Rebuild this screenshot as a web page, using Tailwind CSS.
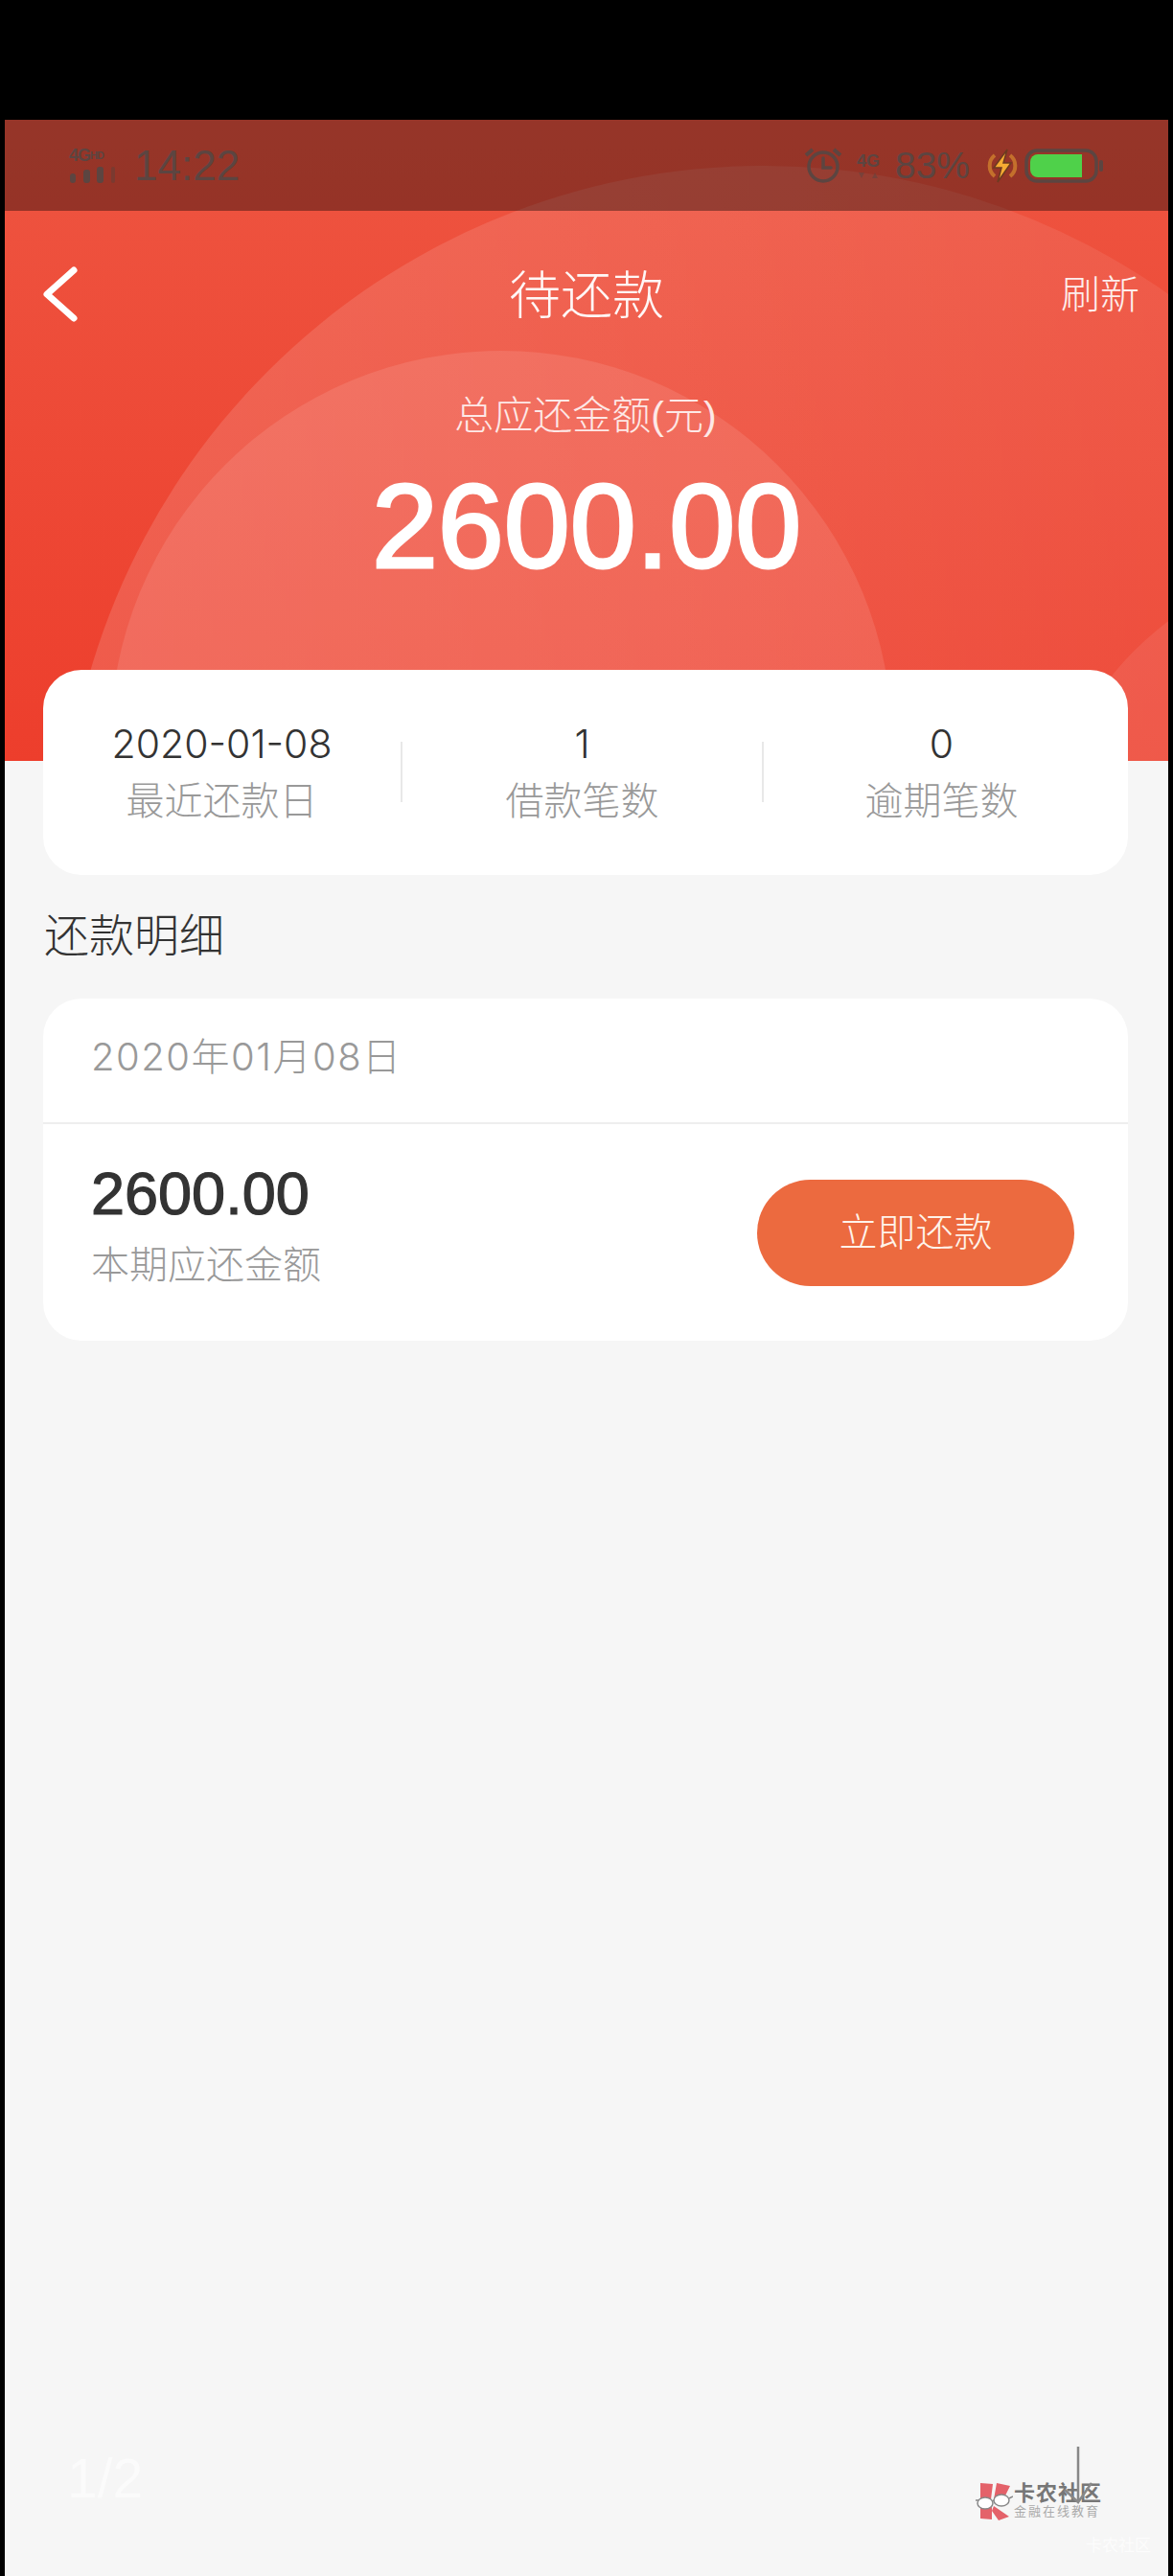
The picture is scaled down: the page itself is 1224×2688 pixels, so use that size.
<!DOCTYPE html>
<html lang="zh-CN">

<head>
    <meta charset="UTF-8">
    <meta name="viewport" content="width=device-width, initial-scale=1.0">
    <title>待还款</title>
    <script src="https://cdn.jsdelivr.net/npm/@tailwindcss/browser@4"></script>
</head>

<body class="bg-black font-['Liberation_Sans','Noto_Sans_CJK_SC',sans-serif]">
    <div class="relative w-[1224px] h-[2688px] pt-[125px] pl-[5px] pr-[5px] overflow-hidden">
        <main class="w-[1214px] h-[2563px] bg-[#f6f6f6]">

            <!-- Header -->
            <header class="relative h-[669px] overflow-hidden bg-[linear-gradient(180deg,#ee5541,#ed3e2c)] text-white">
                <div class="absolute left-[60px] top-[48px] w-[1464px] h-[1464px] rounded-full bg-linear-to-r from-white/14 to-white/5"></div>
                <div class="absolute left-[110px] top-[241px] w-[816px] h-[816px] rounded-full bg-white/10"></div>
                <div class="absolute left-[1085px] top-[460px] w-[640px] h-[640px] rounded-full bg-white/8"></div>

                <!-- Status bar -->
                <div class="relative h-[95px] bg-black/[0.37] flex items-center justify-between text-[#5c4541]">
                    <div class="flex items-center pl-[67px]">
                        <div class="w-[52px] flex flex-col">
                            <span class="text-[18px] leading-[18px] font-bold tracking-[-1px] whitespace-nowrap">4G<span class="text-[11px] align-top">HD</span></span>
                            <svg width="50" height="20" viewBox="0 0 50 20" class="mt-[2px]">
                                <rect x="1" y="8" width="6" height="10" rx="3" fill="#5c4541" />
                                <rect x="15" y="4" width="7" height="14" rx="3" fill="#5c4541" />
                                <rect x="29" y="1" width="7" height="17" rx="3" fill="#5c4541" />
                                <rect x="44" y="1" width="4" height="17" rx="2" fill="#7a3a30" />
                            </svg>
                        </div>
                        <span class="ml-[16px] text-[44px] leading-none">14:22</span>
                    </div>
                    <div class="flex items-center pr-[67px]">
                        <svg width="40" height="40" viewBox="0 0 40 40" fill="none" stroke="#5c4541" stroke-width="3.5">
                            <circle cx="20" cy="21" r="15" />
                            <path d="M20 12v10h8" stroke-linecap="round" />
                            <path d="M2 9l7-6M38 9l-7-6" stroke-width="4" />
                        </svg>
                        <div class="ml-[13px] w-[28px] flex flex-col items-center">
                            <span class="text-[18px] leading-[18px] font-bold">4G</span>
                            <svg width="24" height="8" viewBox="0 0 24 8" class="mt-[2px] opacity-50">
                                <path d="M2 1h6L5 7zM16 7h6l-3-6z" fill="#5c4541" />
                            </svg>
                        </div>
                        <span class="ml-[14px] text-[39px] leading-none">83%</span>
                        <svg width="34" height="36" viewBox="0 0 34 36" class="ml-[17px]">
                            <path d="M9 7a14 14 0 0 0 0 22M25 7a14 14 0 0 1 0 22" fill="none" stroke="#c4702c" stroke-width="4" />
                            <path d="M22 1L8 20h8l-4 15 14-20h-8z" fill="#f5ab33" stroke="#6d3a20" stroke-width="1.5" />
                        </svg>
                        <svg width="83" height="36" viewBox="0 0 83 36" class="ml-[6px]">
                            <rect x="2" y="2" width="73" height="32" rx="11" fill="none" stroke="#5c4541" stroke-width="3.5" />
                            <rect x="78" y="12" width="4" height="12" rx="2" fill="#5c4541" />
                            <path d="M14 6h46v24H14a8 8 0 0 1-8-8v-8a8 8 0 0 1 8-8z" fill="#4fd14a" />
                        </svg>
                    </div>
                </div>

                <!-- Nav -->
                <div class="relative h-[174px] flex items-center justify-center">
                    <svg width="44" height="64" viewBox="0 0 44 64" fill="none" stroke="#fff" stroke-width="7" stroke-linecap="round" stroke-linejoin="round" class="absolute left-[36px] top-[55px]">
                        <path d="M36 7L8 32l28 25" />
                    </svg>
                    <h1 class="text-[54px] leading-none mt-[4px] font-light text-white/95">待还款</h1>
                    <span class="absolute right-[30px] top-[68px] text-[41px] leading-none font-light text-white/90">刷新</span>
                </div>

                <!-- Amount -->
                <p class="relative mt-[10px] h-[60px] pr-[2px] text-[41px] leading-[60px] text-center font-light text-white/85">总应还金额(元)</p>
                <p class="relative h-[170px] text-[124px] leading-[170px] text-center [-webkit-text-stroke:3px_white]">2600.00</p>
            </header>

            <!-- Summary card -->
            <section class="relative -mt-[95px] ml-[40px] w-[1132px] h-[214px] bg-white rounded-[40px] pt-[47px] flex items-start">
                <div class="w-[373px] text-center">
                    <p class="h-[60px] text-[41px] leading-[60px] text-[#333] font-['Inter','Noto_Sans_CJK_SC',sans-serif] font-light">2020-01-08</p>
                    <p class="h-[60px] text-[40px] leading-[60px] text-[#999] font-light">最近还款日</p>
                </div>
                <div class="w-[2px] h-[63px] mt-[28px] bg-[#e8e8e8]"></div>
                <div class="w-[375px] text-center">
                    <p class="h-[60px] text-[41px] leading-[60px] text-[#333] font-['Inter','Noto_Sans_CJK_SC',sans-serif] font-light">1</p>
                    <p class="h-[60px] text-[40px] leading-[60px] text-[#999] font-light">借款笔数</p>
                </div>
                <div class="w-[2px] h-[63px] mt-[28px] bg-[#e8e8e8]"></div>
                <div class="w-[375px] pr-[4px] text-center">
                    <p class="h-[60px] text-[41px] leading-[60px] text-[#333] font-['Inter','Noto_Sans_CJK_SC',sans-serif] font-light">0</p>
                    <p class="h-[60px] text-[40px] leading-[60px] text-[#999] font-light">逾期笔数</p>
                </div>
            </section>

            <!-- Detail -->
            <h2 class="h-[129px] ml-[41px] flex items-center text-[47px] text-[#333] font-light">还款明细</h2>
            <section class="ml-[40px] w-[1132px] h-[357px] bg-white rounded-[40px]">
                <div class="h-[131px] pl-[50px] pb-[8px] border-b-2 border-[#eeeeee] flex items-center text-[40px] tracking-[1.5px] text-[#999] font-['Inter','Noto_Sans_CJK_SC',sans-serif] font-light">2020年01月08日</div>
                <div class="h-[226px] pl-[50px] pr-[56px] flex items-center justify-between">
                    <div class="mb-[2px]">
                        <p class="h-[70px] text-[63px] leading-[70px] text-[#333] [-webkit-text-stroke:1.2px_#333]">2600.00</p>
                        <p class="h-[80px] text-[40px] leading-[80px] text-[#999] font-light">本期应还金额</p>
                    </div>
                    <button class="w-[331px] h-[111px] rounded-full bg-[#ec6a3f] text-[40px] text-[#fff3ea] font-light">立即还款</button>
                </div>
            </section>
        </main>

        <!-- Overlays on the screenshot -->
        <span class="absolute left-[70px] top-[2558px] text-[57px] leading-none text-white/50">1/2</span>
        <div class="absolute left-[1017px] top-[2590px] flex items-start">
            <svg width="40" height="40" viewBox="0 0 40 40">
                <path d="M6 1l13 1-2 16H6zM23 1l14 3-7 14H20zM6 25h12v14l-12-1zM20 25l16 11-11 4-7-10z" fill="#e4626a" />
                <path d="M1 19l4 0M18 20l3-1M36 17l4-2" fill="none" stroke="#888" stroke-width="1.5" />
                <ellipse cx="11" cy="22" rx="8" ry="6" fill="#fff" stroke="#888" stroke-width="1.5" />
                <ellipse cx="28" cy="19" rx="8" ry="6" fill="#fff" stroke="#888" stroke-width="1.5" />
            </svg>
            <div class="ml-[1px] w-[92px]">
                <p class="text-[22px] leading-[23px] tracking-[1px] font-bold text-[#777] whitespace-nowrap">卡农社区</p>
                <p class="text-[13px] leading-[16px] tracking-[2px] text-[#aaa] whitespace-nowrap">金融在线教育</p>
            </div>
        </div>
        <svg width="32" height="62" viewBox="0 0 32 62" fill="none" stroke="#888" stroke-width="2.5" class="absolute left-[1109px] top-[2552px]">
            <path d="M16 1v58M2 46l14 13 14-20" />
        </svg>
        <span class="absolute left-[1133px] top-[2648px] text-[17px] leading-none text-white/70 whitespace-nowrap">卡农社区</span>
    </div>
</body>

</html>
